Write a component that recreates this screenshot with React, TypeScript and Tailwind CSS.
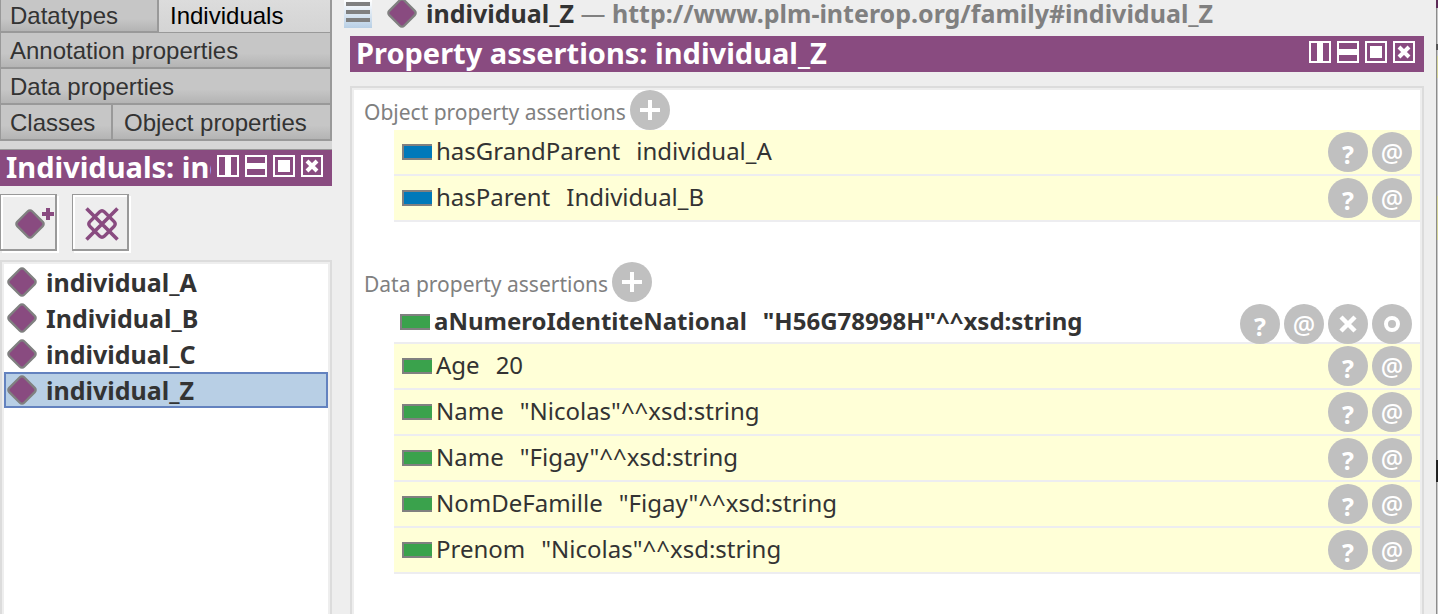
import type { ReactNode } from "react";

function Diamond() {
  return (
    <svg width="32" height="32" viewBox="0 0 32 32" className="shrink-0" aria-hidden="true">
      <rect x="5.5" y="5.5" width="21" height="21" rx="3" transform="rotate(45 16 16)" fill="#894b80" stroke="#808080" strokeWidth="2.4" />
    </svg>
  );
}

function WindowButton({ label, children }: { label: string; children: ReactNode }) {
  return (
    <button type="button" aria-label={label} className="block h-[22px] w-[22px]">
      <svg width="22" height="22" viewBox="0 0 22 22" shapeRendering="crispEdges" aria-hidden="true">
        <rect x="1" y="1" width="20" height="20" fill="none" stroke="#fff" strokeWidth="2" />
        {children}
      </svg>
    </button>
  );
}

function TitleBar({ title }: { title: string }) {
  return (
    <header className="flex h-9 items-start bg-[#894b80] pr-[9px] pl-1.5 text-white">
      <h2 className="h-9 min-w-0 flex-1 overflow-hidden text-[29px] leading-[34px] font-bold whitespace-nowrap">{title}</h2>
      <div className="ml-1.5 flex gap-1.5 pt-[5px]">
        <WindowButton label="Split vertically">
          <rect x="8" y="2" width="6" height="18" fill="#fff" />
        </WindowButton>
        <WindowButton label="Split horizontally">
          <rect x="2" y="8" width="18" height="6" fill="#fff" />
        </WindowButton>
        <WindowButton label="Float">
          <rect x="5" y="5" width="12" height="12" fill="#fff" />
        </WindowButton>
        <WindowButton label="Close">
          <path d="M6 6L16 16M16 6L6 16" stroke="#fff" strokeWidth="4" shapeRendering="auto" />
        </WindowButton>
      </div>
    </header>
  );
}

function Tab({ label, size, selected = false }: { label: string; size: string; selected?: boolean }) {
  return (
    <button
      type="button"
      role="tab"
      aria-selected={selected}
      className={`h-full border-r-2 border-[#999999] text-left whitespace-nowrap ${size} ${
        selected
          ? "border-b bg-linear-to-b from-[#dcdcdc] to-[#d4d4d4] text-black"
          : "border-b-2 bg-linear-to-b from-[#c6c6c6] from-60% to-[#b4b4b4] text-[#333333]"
      }`}
    >
      {label}
    </button>
  );
}

function RoundButton({ label, children }: { label: string; children: ReactNode }) {
  return (
    <button type="button" aria-label={label} className="flex h-10 w-10 shrink-0 items-center justify-center rounded-full bg-[#c0c0c0] text-[25px] leading-9 font-bold text-white">
      {children}
    </button>
  );
}

type Assertion = { property: string; value: string; asserted?: boolean };

function Row({ item, color }: { item: Assertion; color: string }) {
  return (
    <li
      className={`flex items-center gap-1 border-b-2 border-[#ededf0] pr-2 text-[#333333] ${
        item.asserted ? "h-[42px] pl-1.5 font-bold" : "h-[46px] bg-[#ffffd7] pl-2"
      }`}
    >
      <span className={`h-4 w-[30px] shrink-0 border-2 border-r-0 border-[#808080] ${color}`} />
      <span className="flex flex-1 gap-4 pb-0.5 text-2xl whitespace-nowrap">
        <span>{item.property}</span>
        <span>{item.value}</span>
      </span>
      <span className={`flex gap-1 ${item.asserted ? "self-start pt-0.5" : ""}`}>
        <RoundButton label="Explain">
          <span className="pt-1">?</span>
        </RoundButton>
        <RoundButton label="Annotate">
          <span className="font-medium">@</span>
        </RoundButton>
        {item.asserted && (
          <>
            <RoundButton label="Delete">
              <svg width="40" height="40" viewBox="0 0 40 40" aria-hidden="true">
                <path d="M13 13L27 27M27 13L13 27" stroke="#fff" strokeWidth="4.5" />
              </svg>
            </RoundButton>
            <RoundButton label="Edit">
              <svg width="40" height="40" viewBox="0 0 40 40" aria-hidden="true">
                <circle cx="20" cy="20" r="6" fill="none" stroke="#fff" strokeWidth="4" />
              </svg>
            </RoundButton>
          </>
        )}
      </span>
    </li>
  );
}

function Section({ title, items, color }: { title: string; items: Assertion[]; color: string }) {
  return (
    <section>
      <div className="flex h-10 items-center gap-1 pl-2.5">
        <h3 className="pt-1.5 text-[21px] text-[#808080]">{title}</h3>
        <RoundButton label="Add">
          <svg width="40" height="40" viewBox="0 0 40 40" aria-hidden="true">
            <path d="M10 20H30M20 10V30" stroke="#fff" strokeWidth="4" />
          </svg>
        </RoundButton>
      </div>
      <ul className="pl-10">
        {items.map((item) => (
          <Row key={item.property + item.value} item={item} color={color} />
        ))}
      </ul>
    </section>
  );
}

const individuals = ["individual_A", "Individual_B", "individual_C", "individual_Z"];

const objectAssertions: Assertion[] = [
  { property: "hasGrandParent", value: "individual_A" },
  { property: "hasParent", value: "Individual_B" },
];

const dataAssertions: Assertion[] = [
  { property: "aNumeroIdentiteNational", value: '"H56G78998H"^^xsd:string', asserted: true },
  { property: "Age", value: "20" },
  { property: "Name", value: '"Nicolas"^^xsd:string' },
  { property: "Name", value: '"Figay"^^xsd:string' },
  { property: "NomDeFamille", value: '"Figay"^^xsd:string' },
  { property: "Prenom", value: '"Nicolas"^^xsd:string' },
];

const toolButton = "h-[57px] w-[57px] border border-r-2 border-b-2 border-[#999999] shadow-[inset_2px_2px_0_#fff,2px_2px_0_#fff]";

export default function App() {
  return (
    <div className="flex min-h-screen bg-[#eeeeee] font-['Noto_Sans',sans-serif]">
      <aside className="flex w-[332px] shrink-0 flex-col">
        <div role="tablist" className="border-b border-[#999999] bg-[#d6d6d6] pb-2 font-['Liberation_Sans',sans-serif] text-2xl">
          <div className="flex h-[33px] border-l border-[#999999]">
            <Tab label="Datatypes" size="w-[158px] pl-[9px]" />
            <Tab label="Individuals" size="flex-1 pl-[11px]" selected />
          </div>
          <div className="flex h-9 border-l border-[#999999]">
            <Tab label="Annotation properties" size="flex-1 pt-0.5 pl-[9px]" />
          </div>
          <div className="flex h-9 border-l border-[#999999]">
            <Tab label="Data properties" size="flex-1 pt-0.5 pl-[9px]" />
          </div>
          <div className="flex h-9 border-l border-[#999999]">
            <Tab label="Classes" size="w-28 pt-0.5 pl-[9px]" />
            <Tab label="Object properties" size="flex-1 pt-0.5 pl-[11px]" />
          </div>
        </div>
        <TitleBar title="Individuals: individual_Z" />
        <div className="flex gap-[15px] pt-2 pb-[9px]">
          <button type="button" aria-label="Add individual" className={toolButton}>
            <svg width="54" height="54" viewBox="0 0 54 54" aria-hidden="true">
              <rect x="18.5" y="18.5" width="21" height="21" rx="3" transform="rotate(45 29 29)" fill="#894b80" stroke="#808080" strokeWidth="2.4" />
              <path d="M41 19H53M47 13V25" stroke="#894b80" strokeWidth="4" />
            </svg>
          </button>
          <button type="button" aria-label="Delete individual" className={toolButton}>
            <svg width="54" height="54" viewBox="0 0 54 54" aria-hidden="true">
              <path d="M26.500 17Q29 14.500 31.500 17L41 26.500Q43.500 29 41 31.500L31.500 41Q29 43.500 26.500 41L17 31.500Q14.500 29 17 26.500Z" fill="none" stroke="#894b80" strokeWidth="3.2" />
              <path d="M14 14L45 45M45 14L14 45" transform="translate(-0.5 -0.5)" stroke="#894b80" strokeWidth="3.6" />
            </svg>
          </button>
        </div>
        <div className="flex-1 border-2 border-b-0 border-[#dcdcdc]">
          <ul className="h-full border-2 border-b-0 border-[#eeeeee] bg-white">
            {individuals.map((name) => (
              <li key={name}>
                <button
                  type="button"
                  className={`flex h-9 w-full items-center gap-2 border-2 text-left text-[25px] leading-8 font-bold text-[#333333] ${
                    name === "individual_Z" ? "border-[#6382bf] bg-[#b8cfe5]" : "border-transparent"
                  }`}
                >
                  <Diamond />
                  <span className="pb-px">{name}</span>
                </button>
              </li>
            ))}
          </ul>
        </div>
      </aside>

      <main className="ml-[18px] flex min-w-0 flex-1 flex-col">
        <div className="-ml-1.5 flex h-9 items-start">
          <button type="button" aria-label="Menu" className="h-7 w-7 bg-linear-to-b from-white to-[#b8cfe5]">
            <svg width="28" height="28" viewBox="0 0 28 28" aria-hidden="true">
              <path d="M2 4H26M2 12H26M2 20H26" stroke="#808080" strokeWidth="4" />
            </svg>
          </button>
          <div className="ml-3.5 flex h-[26px] items-center gap-2">
            <Diamond />
            <p className="text-[25px] leading-8 font-bold whitespace-nowrap text-[#808080]">
              <span className="text-[#333333]">individual_Z</span>
              <span className="font-normal"> — </span>http://www.plm-interop.org/family#individual_Z
            </p>
          </div>
        </div>
        <TitleBar title="Property assertions: individual_Z" />
        <div className="mt-3.5 flex-1 border-2 border-b-0 border-[#dcdcdc]">
          <div className="flex h-full flex-col gap-10 border-2 border-b-0 border-[#eeeeee] bg-white">
            <Section title="Object property assertions" items={objectAssertions} color="bg-[#0079ba]" />
            <Section title="Data property assertions" items={dataAssertions} color="bg-[#3aa24c]" />
          </div>
        </div>
      </main>
      <div className="ml-3 flex w-0.5 shrink-0 flex-col bg-linear-to-r from-[#8c8c8c] from-50% to-[#c8c8c8] to-50%" aria-hidden="true">
        <div className="h-2 bg-[#5c2a56]" />
        <div className="mt-9 h-1.5 bg-[#555555]" />
        <div className="mt-1.5 ml-px h-[22px] bg-[#d5d49a]" />
        <div className="mt-[118px] ml-px h-11 bg-[#d5d49a]" />
        <div className="mt-[220px] h-[22px] bg-[#222222]" />
      </div>
    </div>
  );
}
